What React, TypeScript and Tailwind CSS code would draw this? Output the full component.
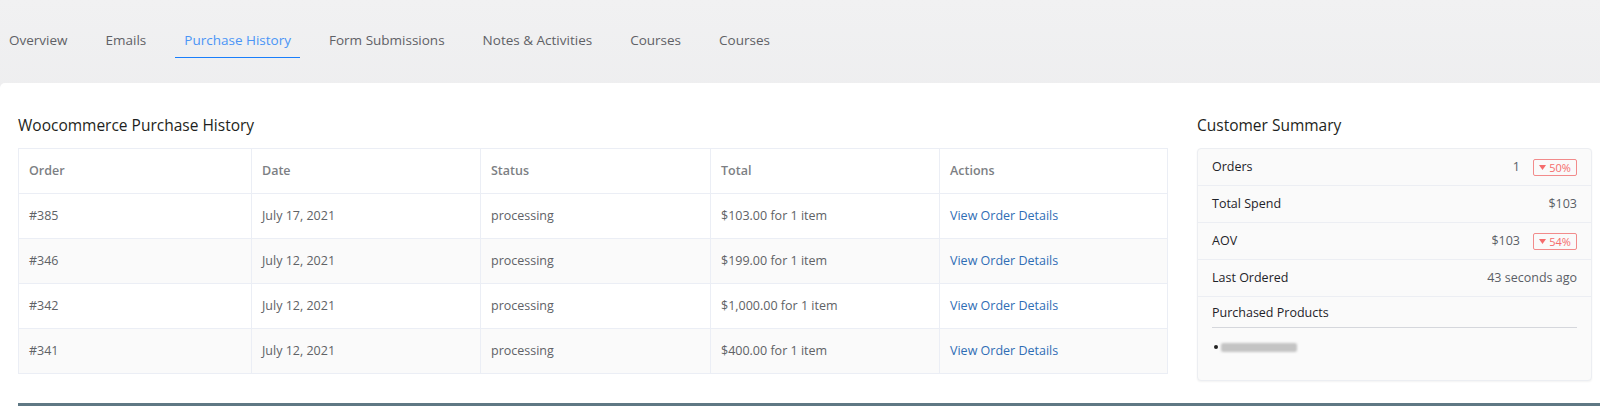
import React from 'react';

const tabs = ['Overview', 'Emails', 'Purchase History', 'Form Submissions', 'Notes & Activities', 'Courses', 'Courses'];

const orders = [
  { id: '#385', date: 'July 17, 2021', status: 'processing', total: '$103.00 for 1 item' },
  { id: '#346', date: 'July 12, 2021', status: 'processing', total: '$199.00 for 1 item' },
  { id: '#342', date: 'July 12, 2021', status: 'processing', total: '$1,000.00 for 1 item' },
  { id: '#341', date: 'July 12, 2021', status: 'processing', total: '$400.00 for 1 item' },
];

const Badge: React.FC<{ value: string }> = ({ value }) => (
  <span className="ml-[13px] inline-flex h-[17px] w-[44px] items-center justify-center gap-[3px] rounded-[2px] border border-[#f28b8b] text-[11px] leading-none text-[#f56c6c]">
    <svg width="7" height="5" viewBox="0 0 7 5">
      <path d="M0 0h7L3.5 5z" fill="#f56c6c" />
    </svg>
    {value}
  </span>
);

const SummaryRow: React.FC<{ label: string; children: React.ReactNode }> = ({ label, children }) => (
  <div className="flex h-[37px] items-center justify-between border-b border-[#eceef3] px-[14px]">
    <span className="text-[#1f2329]">{label}</span>
    <span className="flex items-center text-[#5a5e66]">{children}</span>
  </div>
);

export default function App() {
  return (
    <div className="h-[414px] w-[1600px] overflow-hidden bg-gradient-to-b from-[#f1f1f2] to-[#e3e4e7] text-[12.5px]" style={{ fontFamily: '"Open Sans", "Noto Sans", sans-serif' }}>
      <div className="flex h-[83px] items-start gap-[20px] pt-[30px]">
        {tabs.map((t, i) => (
          <div
            key={i}
            className={
              i === 2
                ? 'border-b border-[#1a7efb] px-[9px] pb-[7px] text-[13.5px] text-[#4b95f6]'
                : 'px-[9px] pb-[7px] text-[13.5px] text-[#5f6166]'
            }
          >
            {t}
          </div>
        ))}
      </div>

      <div className="h-[331px] rounded-tl-[5px] bg-white">
        <div className="flex gap-[29px] pl-[18px] pr-[8px] pt-[32px]">
          <div className="w-[1150px]">
            <h2 className="mb-[13px] h-[20px] text-[15.5px] leading-[20px] text-[#1e1f21]">Woocommerce Purchase History</h2>
            <table className="w-full border-collapse border border-[#ebeef5] text-left">
              <colgroup>
                <col className="w-[233px]" />
                <col className="w-[229px]" />
                <col className="w-[230px]" />
                <col className="w-[229px]" />
                <col />
              </colgroup>
              <thead>
                <tr className="h-[45px]">
                  {['Order', 'Date', 'Status', 'Total', 'Actions'].map((h) => (
                    <th key={h} className="border border-[#ebeef5] px-[10px] font-semibold text-[#7d7f84]">
                      {h}
                    </th>
                  ))}
                </tr>
              </thead>
              <tbody>
                {orders.map((o, i) => (
                  <tr key={o.id} className={i % 2 === 1 ? 'h-[45px] bg-[#fafafa]' : 'h-[45px] bg-white'}>
                    <td className="border border-[#ebeef5] px-[10px] text-[#606266]">{o.id}</td>
                    <td className="border border-[#ebeef5] px-[10px] text-[#606266]">{o.date}</td>
                    <td className="border border-[#ebeef5] px-[10px] text-[#606266]">{o.status}</td>
                    <td className="border border-[#ebeef5] px-[10px] text-[#606266]">{o.total}</td>
                    <td className="border border-[#ebeef5] px-[10px] text-[#2f6db5]">View Order Details</td>
                  </tr>
                ))}
              </tbody>
            </table>
          </div>

          <div className="w-[395px]">
            <h2 className="mb-[13px] h-[20px] text-[15.5px] leading-[20px] text-[#1e1f21]">Customer Summary</h2>
            <div className="rounded-[4px] border border-[#eceef2] bg-[#fafafa] shadow-[0_1px_2px_rgba(0,0,0,0.05)]">
              <SummaryRow label="Orders">
                1<Badge value="50%" />
              </SummaryRow>
              <SummaryRow label="Total Spend">$103</SummaryRow>
              <SummaryRow label="AOV">
                $103<Badge value="54%" />
              </SummaryRow>
              <SummaryRow label="Last Ordered">43 seconds ago</SummaryRow>
              <div className="px-[14px] pb-[28px] pt-[7px]">
                <div className="border-b border-[#d5d7dc] pb-[4px] text-[#1f2329]">Purchased Products</div>
                <div className="mt-[15px] flex items-center gap-[3px] pl-[2px]">
                  <span className="h-[4px] w-[4px] rounded-full bg-[#222]" />
                  <span className="h-[9px] w-[76px] rounded-[2px] bg-[#c4c4c4] blur-[1px]" />
                </div>
              </div>
            </div>
          </div>
        </div>
        <div className="ml-[18px] mt-[22px] h-[3px] bg-[#5f7884]" />
      </div>
    </div>
  );
}
